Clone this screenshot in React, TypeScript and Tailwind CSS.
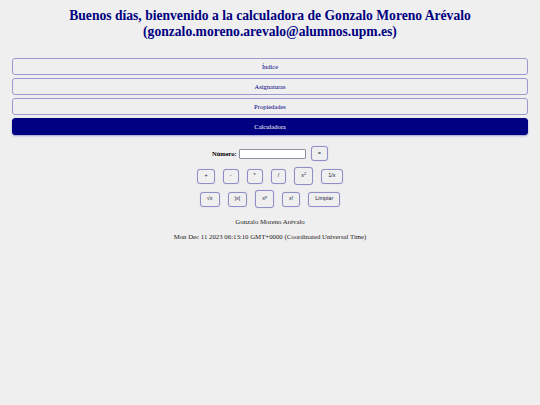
import React from "react";

const navItems = ["Índice", "Asignaturas", "Propiedades", "Calculadora"];

const CalcButton = ({ children, tall }: { children: React.ReactNode; tall?: boolean }) => (
  <button
    className={`px-[6px] ${tall ? "h-[18px]" : "h-[15px]"} rounded-[3px] border border-[#8f8fc8] bg-[#efefef] text-[5.5px] text-[#1a1a40] leading-none font-['Liberation_Sans',sans-serif] shadow-[0_0_1px_#b8b8e0]`}
  >
    {children}
  </button>
);

const App = () => {
  return (
    <div className="min-h-[405px] w-[540px] bg-[#efefef] font-['Liberation_Serif',serif]">
      <h1 className="pt-[8px] text-center text-[13.6px] font-bold leading-[16px] text-[#000080]">
        Buenos días, bienvenido a la calculadora de Gonzalo Moreno Arévalo
        <br />
        (gonzalo.moreno.arevalo@alumnos.upm.es)
      </h1>

      <nav className="mx-[12px] mt-[18px] flex flex-col gap-[3px]">
        {navItems.map((item) => (
          <a
            key={item}
            className={`flex h-[17px] items-center justify-center rounded-[3px] border text-[6.5px] ${
              item === "Calculadora"
                ? "border-[#000080] bg-[#000080] text-white shadow-[0_1px_2px_#9a9ad0]"
                : "border-[#9a9ad0] text-[#000080]"
            }`}
          >
            {item}
          </a>
        ))}
      </nav>

      <div className="mt-[11px] flex flex-col items-center">
        <div className="flex items-center gap-[5px]">
          <label className="flex items-center gap-[2px] text-[6.5px] font-bold text-black">
            Número:
            <input className="h-[10px] w-[67px] rounded-[1px] border border-[#9090a0] bg-white" />
          </label>
          <CalcButton>=</CalcButton>
        </div>

        <div className="mt-[6px] flex items-center gap-[8px]">
          <CalcButton>+</CalcButton>
          <CalcButton>-</CalcButton>
          <CalcButton>*</CalcButton>
          <CalcButton>/</CalcButton>
          <CalcButton tall>
            x<sup className="text-[4px]">2</sup>
          </CalcButton>
          <CalcButton>1/x</CalcButton>
        </div>

        <div className="mt-[5px] flex items-center gap-[8px]">
          <CalcButton>√x</CalcButton>
          <CalcButton>|x|</CalcButton>
          <CalcButton tall>
            x<sup className="text-[4px]">y</sup>
          </CalcButton>
          <CalcButton>x!</CalcButton>
          <CalcButton>Limpiar</CalcButton>
        </div>

        <p className="mt-[9px] text-[6.8px] text-[#222]">Gonzalo Moreno Arévalo</p>
        <p className="mt-[5px] text-[6.8px] text-[#222]">
          Mon Dec 11 2023 06:13:10 GMT+0000 (Coordinated Universal Time)
        </p>
      </div>
    </div>
  );
};

export default App;
